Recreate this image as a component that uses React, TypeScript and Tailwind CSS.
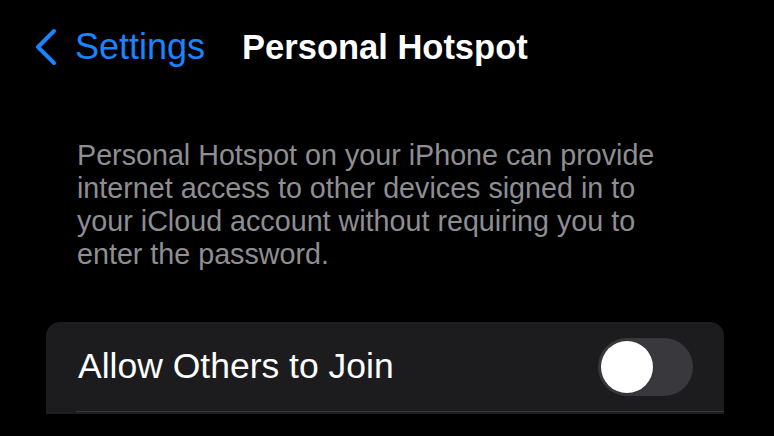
import { useState } from 'react';

const font = { fontFamily: '"Liberation Sans", Arial, sans-serif' };

function Chevron() {
  return (
    <svg width="24" height="38" viewBox="0 0 24 38" fill="none">
      <path d="M20 3 L4 19 L20 35" stroke="#1a84ff" strokeWidth="4" strokeLinecap="round" strokeLinejoin="round" />
    </svg>
  );
}

const App = () => {
  const [on, setOn] = useState(false);

  return (
    <div className="w-[774px] h-[436px] bg-black overflow-hidden text-white" style={font}>
      <div className="flex items-center h-[62px] pt-[32px] pl-[34px]">
        <Chevron />
        <span className="ml-[17px] text-[36px] text-[#1a84ff] leading-none">Settings</span>
        <span className="ml-[37px] text-[34.5px] font-bold leading-none">Personal Hotspot</span>
      </div>

      <p className="mt-[77px] pl-[77px] text-[28.7px] leading-[33px] text-[#8e8e93] whitespace-nowrap">
        Personal Hotspot on your iPhone can provide
        <br />
        internet access to other devices signed in to
        <br />
        your iCloud account without requiring you to
        <br />
        enter the password.
      </p>

      <div className="ml-[46px] mr-[50px] mt-[51px] rounded-t-[14px] bg-[#1c1c1e] pb-[2px]">
        <div className="flex items-center justify-between h-[89px] pl-[32px] pr-[31px]">
          <span className="text-[35.5px]">Allow Others to Join</span>
          <button
            onClick={() => setOn(!on)}
            className={`relative w-[95px] h-[58px] rounded-full ${on ? 'bg-[#30d158]' : 'bg-[#39393d]'}`}
          >
            <span
              className={`absolute top-[3px] w-[52px] h-[52px] rounded-full bg-white shadow ${on ? 'left-[40px]' : 'left-[3px]'}`}
            />
          </button>
        </div>
        <div className="ml-[30px] h-px bg-[#38383a]" />
      </div>
    </div>
  );
};

export default App;
